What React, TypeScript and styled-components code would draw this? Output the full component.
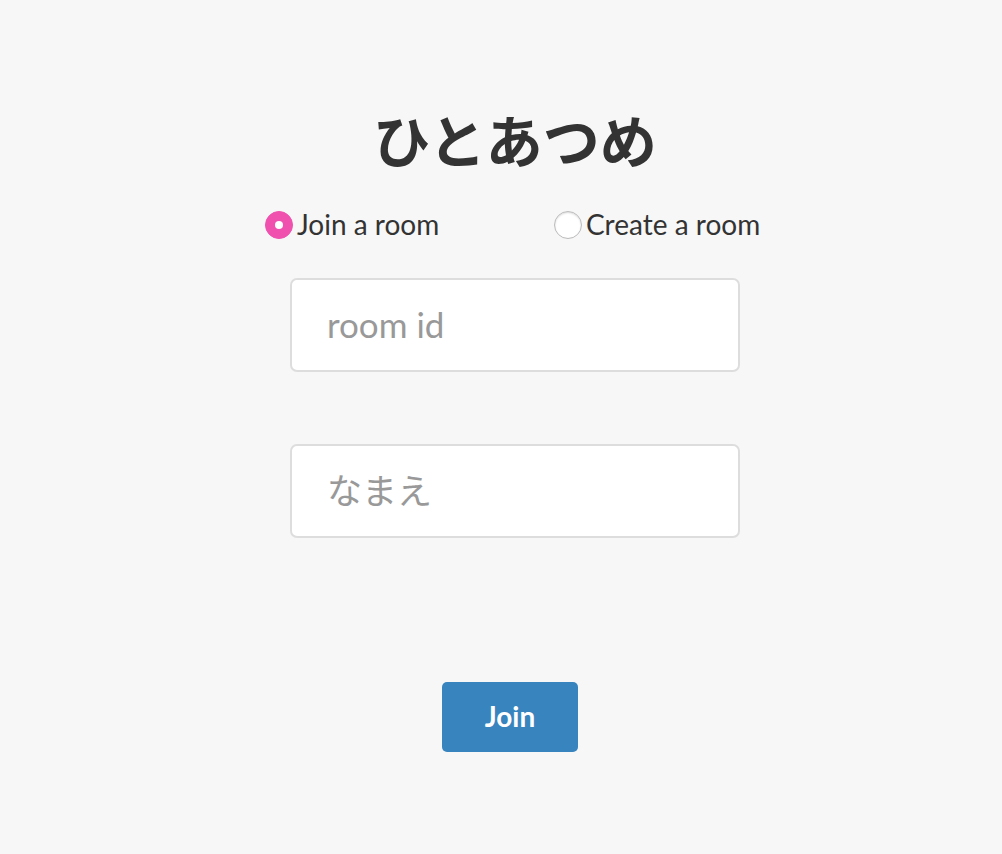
import React from "react";
import styled, { createGlobalStyle } from "styled-components";

const GlobalStyle = createGlobalStyle`
  html, body {
    margin: 0;
    padding: 0;
    background: #f7f7f7;
    font-family: Lato, "Noto Sans CJK JP", sans-serif;
    color: #333;
  }
`;

const Page = styled.div`
  display: flex;
  justify-content: center;
  padding-left: 28px;
  min-height: 854px;
  box-sizing: border-box;
`;

const Column = styled.form`
  width: 450px;
  display: flex;
  flex-direction: column;
  align-items: center;
  padding-top: 102px;
`;

const Title = styled.h1`
  margin: 0;
  font-family: "Noto Sans CJK JP", sans-serif;
  font-size: 57px;
  line-height: 72px;
  font-weight: 700;
  color: #333;
`;

const RadioRow = styled.div`
  align-self: flex-start;
  margin: 34px 0 0 -25px;
  display: grid;
  grid-template-columns: 289px auto;
  height: 32px;
`;

const RadioLabel = styled.label`
  display: flex;
  align-items: center;
  gap: 4px;
  font-size: 28px;
  line-height: 32px;
  white-space: nowrap;
  cursor: pointer;
`;

const RadioInput = styled.input`
  appearance: none;
  margin: 2px 0 0;
  width: 28px;
  height: 28px;
  border-radius: 50%;
  box-sizing: border-box;
  background: #fff;
  border: 1px solid #bbb;
  box-shadow: inset 0 1px 2px rgba(0, 0, 0, 0.15);
  position: relative;
  cursor: pointer;

  &:checked {
    background: #f050ae;
    border-color: #f050ae;
    box-shadow: none;
  }

  &:checked::after {
    content: "";
    position: absolute;
    left: 50%;
    top: 50%;
    width: 8px;
    height: 8px;
    margin: -4px 0 0 -4px;
    border-radius: 50%;
    background: #fff;
  }
`;

const TextField = styled.input<{ $gap: number }>`
  width: 450px;
  height: 94px;
  box-sizing: border-box;
  margin-top: ${p => p.$gap}px;
  padding: 0 35px 3px;
  border: 2px solid #ddd;
  border-radius: 7px;
  background: #fff;
  font-family: Lato, "Noto Sans CJK JP", sans-serif;
  font-size: 35px;
  color: #333;
  outline: none;

  &::placeholder {
    color: #999;
  }
`;

const SubmitButton = styled.button`
  margin-top: 144px;
  margin-left: -10px;
  width: 136px;
  height: 70px;
  padding: 0 0 3px;
  border: none;
  border-radius: 5px;
  background: #3784bf;
  color: #fff;
  font-family: Lato, sans-serif;
  font-size: 28px;
  font-weight: 700;
  cursor: pointer;
`;

export default function App() {
  const [mode, setMode] = React.useState<"join" | "create">("join");

  return (
    <>
      <GlobalStyle />
      <Page>
        <Column onSubmit={e => e.preventDefault()}>
          <Title>ひとあつめ</Title>
          <RadioRow>
            <RadioLabel>
              <RadioInput
                type="radio"
                name="mode"
                checked={mode === "join"}
                onChange={() => setMode("join")}
              />
              Join a room
            </RadioLabel>
            <RadioLabel>
              <RadioInput
                type="radio"
                name="mode"
                checked={mode === "create"}
                onChange={() => setMode("create")}
              />
              Create a room
            </RadioLabel>
          </RadioRow>
          <TextField $gap={38} placeholder="room id" />
          <TextField $gap={72} placeholder="なまえ" />
          <SubmitButton type="submit">{mode === "join" ? "Join" : "Create"}</SubmitButton>
        </Column>
      </Page>
    </>
  );
}
